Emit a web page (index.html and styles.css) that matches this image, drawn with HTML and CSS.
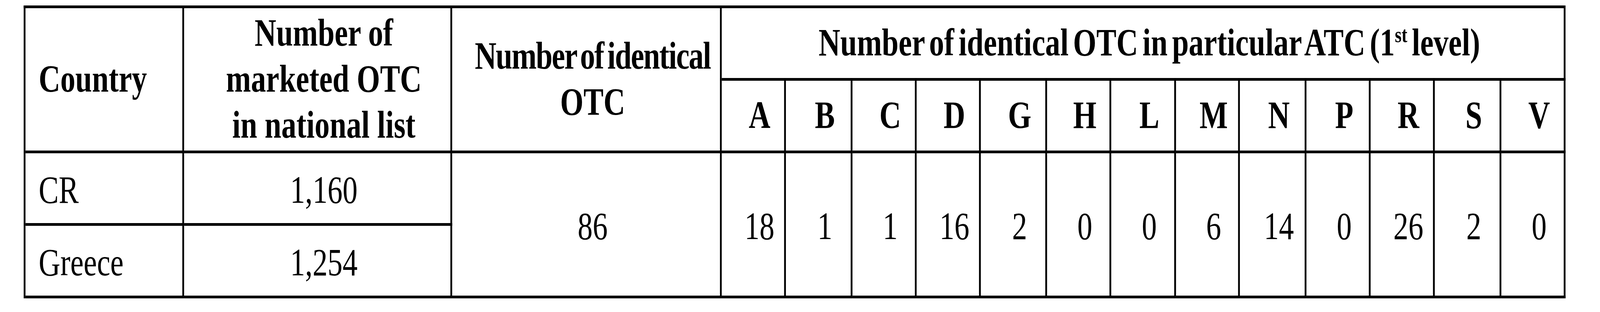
FILE: index.html
```html
<!DOCTYPE html>
<html lang="en">
<head>
<meta charset="utf-8">
<title>Identical OTC medicines</title>
<link rel="stylesheet" href="styles.css">
</head>
<body>
<div class="page">
  <table class="otc">
    <colgroup>
      <col class="w-country">
      <col class="w-market">
      <col class="w-ident">
      <col class="w-s"><col class="w-l"><col class="w-s"><col class="w-s"><col class="w-l2">
      <col class="w-s"><col class="w-m"><col class="w-x"><col class="w-l"><col class="w-s">
      <col class="w-s"><col class="w-l"><col class="w-s">
    </colgroup>
    <thead>
      <tr class="row">
        <th rowspan="2" class="left">Country</th>
        <th rowspan="2">Number of<br>marketed OTC<br>in national list</th>
        <th rowspan="2"><span class="tight">Number of identical</span><br>OTC</th>
        <th colspan="13" class="atc">Number of identical OTC in particular ATC (1<sup>st</sup> level)</th>
      </tr>
      <tr class="row">
        <th>A</th><th>B</th><th>C</th><th>D</th><th>G</th><th>H</th><th>L</th>
        <th>M</th><th>N</th><th>P</th><th>R</th><th>S</th><th>V</th>
      </tr>
    </thead>
    <tbody>
      <tr class="row">
        <td class="left">CR</td>
        <td>1,160</td>
        <td rowspan="2">86</td>
        <td rowspan="2">18</td>
        <td rowspan="2">1</td>
        <td rowspan="2">1</td>
        <td rowspan="2">16</td>
        <td rowspan="2">2</td>
        <td rowspan="2">0</td>
        <td rowspan="2">0</td>
        <td rowspan="2">6</td>
        <td rowspan="2">14</td>
        <td rowspan="2">0</td>
        <td rowspan="2">26</td>
        <td rowspan="2">2</td>
        <td rowspan="2">0</td>
      </tr>
      <tr class="row">
        <td class="left">Greece</td>
        <td>1,254</td>
      </tr>
    </tbody>
  </table>
</div>
</body>
</html>
```

FILE: styles.css
```css
html, body {
  margin: 0;
  padding: 0;
  background: #ffffff;
  overflow: hidden;
}

.page {
  width: 5336px;
  box-sizing: border-box;
  padding: 14px 0 0 79px;
  transform-origin: 0 0;
}

/* The sandbox window is narrower than the 5336px design width:
   squeeze the page horizontally so the whole table fits the frame. */
@media (max-width: 5000px) {
  .page {
    transform: scaleX(0.767616);
  }
}

.otc {
  table-layout: fixed;
  width: 5142px;
  border-collapse: separate;
  border-spacing: 0;
  border-left: 6px solid #000;
  border-top: 7px solid #000;
  font-family: "Liberation Serif", "Times New Roman", serif;
  font-size: 100px;
  line-height: 118px;
  color: #000;
}

.w-country { width: 529px; }
.w-market  { width: 894px; }
.w-ident   { width: 899px; }
.w-s  { width: 214px; }
.w-l  { width: 222px; }
.w-l2 { width: 221px; }
.w-m  { width: 216px; }
.w-x  { width: 213px; }

.row {
  height: 186px;
}

.otc th,
.otc td {
  border-right: 6px solid #000;
  border-bottom: 7px solid #000;
  padding: 0 0 0 44px;
  text-align: center;
  vertical-align: middle;
  white-space: nowrap;
}

.otc th {
  font-weight: bold;
  padding-bottom: 4px;
}

.otc td {
  font-weight: normal;
  padding-top: 8px;
}

.otc .left {
  text-align: left;
}

.tight {
  letter-spacing: -0.025em;
  word-spacing: -0.1em;
}

.atc {
  word-spacing: -0.1em;
}

.atc sup {
  font-size: 0.58em;
  line-height: 0;
  vertical-align: super;
}
```
